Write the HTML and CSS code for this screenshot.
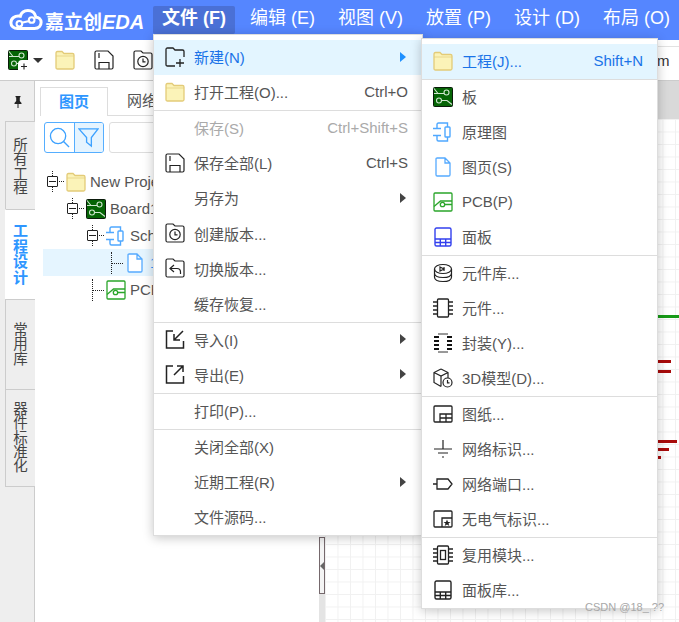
FILE: index.html
```html
<!DOCTYPE html>
<html lang="zh">
<head>
<meta charset="utf-8">
<title>嘉立创EDA</title>
<link rel="stylesheet" href="styles.css">
</head>
<body>
<svg class="defs" width="0" height="0">
  <symbol id="folder" viewBox="0 0 20 20"><path d="M1 3.2Q1 1.500 2.500 1.500H7L9 3.500H17.500Q19 3.500 19 5V17.500Q19 19 17.500 19H2.500Q1 19 1 17.500Z" fill="#fbf3b8" stroke="#e3cb78" stroke-width="1.300"/><path d="M1 6H19" stroke="#e3cb78" stroke-width=".7" fill="none"/></symbol>
  <symbol id="board" viewBox="0 0 20 20"><rect x=".5" y=".5" width="19" height="19" rx="1" fill="#056405" stroke="#0b1a0b"/><g fill="none" stroke="#cfe6cf" stroke-width="1.100"><circle cx="13.500" cy="5.500" r="2.500"/><circle cx="6" cy="13.500" r="2.500"/><path d="M1 6.500H11M8.500 13.500H14L19 17.500M1 1.500L5 6.500"/></g></symbol>
  <symbol id="sch" viewBox="0 0 20 20"><g fill="none" stroke="#4fa8ff" stroke-width="1.400"><path d="M4 6V2.500Q4 1 5.500 1H14.500V5M14.500 15V19H5.500Q4 19 4 17.500V14"/><rect x="12" y="5" width="5" height="10" rx=".8"/><path d="M0 6.500H8M0 13.500H8"/></g></symbol>
  <symbol id="page" viewBox="0 0 20 20"><path d="M3 2.200Q3 1 4.200 1H12L17 6V17.800Q17 19 15.800 19H4.200Q3 19 3 17.800ZM12 1V6H17" fill="#fff" stroke="#55aaff" stroke-width="1.300"/></symbol>
  <symbol id="pcb" viewBox="0 0 20 20"><g fill="none" stroke="#2aa52a" stroke-width="1.300"><path d="M2 1H18Q19 1 19 2V18Q19 19 18 19H2Q1 19 1 18V2Q1 1 2 1Z"/><circle cx="9.500" cy="12.500" r="2.200"/><path d="M1 14.500L7.500 9H19M11.500 12.500H19"/></g></symbol>
  <symbol id="panel" viewBox="0 0 20 20"><g fill="none" stroke="#3340ee" stroke-width="1.400"><rect x="2" y="1" width="16" height="18" rx="1.500"/><path d="M2 12H18M2 15.500H18M7.300 12V19M12.700 12V19"/></g></symbol>
  <symbol id="saveic" viewBox="0 0 20 20"><g fill="none" stroke="#222" stroke-width="1.200"><path d="M1 2.500Q1 1 2.500 1H14L19 6V17.500Q19 19 17.500 19H2.500Q1 19 1 17.500Z"/><path d="M5 19V12.500H15V19M5 3V8"/></g></symbol>
  <symbol id="verc" viewBox="0 0 20 20"><g fill="none" stroke="#222" stroke-width="1.200"><path d="M1 2.500Q1 1 2.500 1H8L10 3H17.500Q19 3 19 4.500V17.500Q19 19 17.500 19H2.500Q1 19 1 17.500Z"/><circle cx="10" cy="11.500" r="5.200"/><path d="M10 8.500V11.800H12.500"/></g></symbol>
  <symbol id="comp" viewBox="0 0 20 20"><g fill="none" stroke="#222" stroke-width="1.300"><rect x="4.500" y="1" width="11" height="18" rx="1"/><path d="M0 4H4.500M0 8H4.500M0 12H4.500M0 16H4.500M15.500 4H20M15.500 8H20M15.500 12H20M15.500 16H20"/></g></symbol>
</svg>

<header class="topbar">
  <div class="logo">
    <svg class="logo-cloud" viewBox="0 0 36 24"><path d="M9 21H27C32 21 34 17.500 34 14.500C34 11 31.500 9 28.500 9C27.500 4.500 24 2 20 2C16 2 13 4.500 12 8C6 7 2 10.500 2 15C2 18.500 5 21 9 21Z" fill="none" stroke="#fff" stroke-width="3.200"/><circle cx="11" cy="16" r="3" fill="none" stroke="#fff" stroke-width="2.200"/><circle cx="24" cy="12" r="3" fill="none" stroke="#fff" stroke-width="2.200"/><path d="M13.500 15L21.500 13" stroke="#fff" stroke-width="2.200"/></svg>
    <span class="logo-text">嘉立创<b class="logo-eda">EDA</b></span>
  </div>
  <nav class="nav">
    <span class="nav-item nav-active">文件 (F)</span>
    <span class="nav-item">编辑 (E)</span>
    <span class="nav-item">视图 (V)</span>
    <span class="nav-item">放置 (P)</span>
    <span class="nav-item">设计 (D)</span>
    <span class="nav-item">布局 (O)</span>
  </nav>
</header>

<div class="toolbar">
  <span class="tool tool-board">
    <svg class="ic"><use href="#board"/></svg>
    <svg class="plus-badge" viewBox="0 0 11 11"><path d="M0 11V4Q0 0 4 0H11V11Z" fill="#fff"/><path d="M6 3.500V9.500M3 6.500H9" stroke="#222" stroke-width="1.100"/></svg>
  </span>
  <span class="caret"></span>
  <svg class="ic tool"><use href="#folder"/></svg>
  <svg class="ic tool"><use href="#saveic"/></svg>
  <svg class="ic tool"><use href="#verc"/></svg>
  <span class="tool-right">m</span>
</div>

<main class="main">
  <aside class="side">
    <div class="pin"><svg class="pin-ic" viewBox="0 0 10 12"><path d="M2.500 0H7.500V1L6.800 1.500V5L8.500 7V8H5.500V12H4.500V8H1.500V7L3.200 5V1.500L2.500 1Z" fill="#222"/></svg></div>
    <div class="vtab vtab-1">所有工程</div>
    <div class="vtab vtab-2 vtab-active">工程设计</div>
    <div class="vtab vtab-3">常用库</div>
    <div class="vtab vtab-4">器件标准化</div>
  </aside>

  <section class="panel">
    <div class="tabs">
      <span class="tab tab-active">图页</span>
      <span class="tab">网络</span>
    </div>
    <div class="search">
      <div class="search-btns">
        <span class="sbtn"><svg class="sic" viewBox="0 0 22 22"><circle cx="9.500" cy="9.500" r="8" fill="none" stroke="#3ea2ff" stroke-width="1.400"/><path d="M15 15L21 21" stroke="#3ea2ff" stroke-width="1.400"/></svg></span>
        <span class="sbtn sbtn-on"><svg class="sic" viewBox="0 0 22 22"><path d="M1 2H21L14 11V20L9 16V11Z" fill="none" stroke="#3ea2ff" stroke-width="1.400"/></svg></span>
      </div>
      <span class="sinput"></span>
    </div>
    <ul class="tree">
      <li class="node lv0"><span class="tog"></span><svg class="ic"><use href="#folder"/></svg><span class="nlabel">New Project</span></li>
      <li class="node lv1"><span class="tog"></span><svg class="ic"><use href="#board"/></svg><span class="nlabel">Board1</span></li>
      <li class="node lv2"><span class="tog"></span><svg class="ic"><use href="#sch"/></svg><span class="nlabel">Sch1</span></li>
      <li class="node lv3 node-on"><span class="leaf"></span><svg class="ic"><use href="#page"/></svg><span class="nlabel nlabel-on">1.P1</span></li>
      <li class="node lv2b"><span class="leaf"></span><svg class="ic"><use href="#pcb"/></svg><span class="nlabel">PCB1</span></li>
    </ul>
  </section>

  <div class="split">
    <div class="split-handle"><span class="split-arrow"></span></div>
    <div class="split-dots"></div>
  </div>

  <section class="canvas">
    <div class="doc-tabs"></div>
    <div class="grid">
      <i class="wire wire-g"></i>
      <i class="wire wire-r1"></i>
      <i class="wire wire-r2"></i>
      <i class="wire wire-r3"></i>
      <i class="wire wire-r4"></i>
      <i class="wire wire-r5"></i>
    </div>
  </section>
</main>

<div class="menu menu-file">
  <div class="mi mi-hover"><svg class="ic mic" viewBox="0 0 20 20"><path d="M10 19H2.500Q1 19 1 17.500V2.500Q1 1 2.500 1H8L10 3H17.500Q19 3 19 4.500V10" fill="none" stroke="#222" stroke-width="1.300"/><path d="M15 12V20M11 16H19" stroke="#222" stroke-width="1.300"/></svg><span class="ml">新建(N)</span><span class="arr arr-blue"></span></div>
  <div class="mi"><svg class="ic mic"><use href="#folder"/></svg><span class="ml">打开工程(O)...</span><span class="sc">Ctrl+O</span></div>
  <div class="sep"></div>
  <div class="mi mi-off"><span class="mic"></span><span class="ml">保存(S)</span><span class="sc">Ctrl+Shift+S</span></div>
  <div class="mi"><svg class="ic mic"><use href="#saveic"/></svg><span class="ml">保存全部(L)</span><span class="sc">Ctrl+S</span></div>
  <div class="mi"><span class="mic"></span><span class="ml">另存为</span><span class="arr"></span></div>
  <div class="mi"><svg class="ic mic"><use href="#verc"/></svg><span class="ml">创建版本...</span></div>
  <div class="mi"><svg class="ic mic" viewBox="0 0 20 20"><g fill="none" stroke="#222" stroke-width="1.200"><path d="M1 2.500Q1 1 2.500 1H8L10 3H17.500Q19 3 19 4.500V17.500Q19 19 17.500 19H2.500Q1 19 1 17.500Z"/><path d="M9 7L5 10.500L9 14M5 10.500H12Q15.500 10.500 15.500 14V16"/></g></svg><span class="ml">切换版本...</span></div>
  <div class="mi"><span class="mic"></span><span class="ml">缓存恢复...</span></div>
  <div class="sep"></div>
  <div class="mi"><svg class="ic mic" viewBox="0 0 20 20"><g fill="none" stroke="#222" stroke-width="1.500"><path d="M8 2H1.500V19H18.500V12"/><path d="M18 2L9 11M9 5V11H15"/></g></svg><span class="ml">导入(I)</span><span class="arr"></span></div>
  <div class="mi"><svg class="ic mic" viewBox="0 0 20 20"><g fill="none" stroke="#222" stroke-width="1.500"><path d="M8 2H1.500V19H18.500V12"/><path d="M9 11L18 2M12 2H18V8"/></g></svg><span class="ml">导出(E)</span><span class="arr"></span></div>
  <div class="sep"></div>
  <div class="mi"><span class="mic"></span><span class="ml">打印(P)...</span></div>
  <div class="sep"></div>
  <div class="mi"><span class="mic"></span><span class="ml">关闭全部(X)</span></div>
  <div class="mi"><span class="mic"></span><span class="ml">近期工程(R)</span><span class="arr"></span></div>
  <div class="mi"><span class="mic"></span><span class="ml">文件源码...</span></div>
</div>

<div class="menu menu-new">
  <div class="mi mi-hover"><svg class="ic mic"><use href="#folder"/></svg><span class="ml">工程(J)...</span><span class="sc">Shift+N</span></div>
  <div class="sep"></div>
  <div class="mi"><svg class="ic mic"><use href="#board"/></svg><span class="ml">板</span></div>
  <div class="mi"><svg class="ic mic"><use href="#sch"/></svg><span class="ml">原理图</span></div>
  <div class="mi"><svg class="ic mic"><use href="#page"/></svg><span class="ml">图页(S)</span></div>
  <div class="mi"><svg class="ic mic"><use href="#pcb"/></svg><span class="ml">PCB(P)</span></div>
  <div class="mi"><svg class="ic mic"><use href="#panel"/></svg><span class="ml">面板</span></div>
  <div class="sep"></div>
  <div class="mi"><svg class="ic mic" viewBox="0 0 20 20"><g fill="none" stroke="#222" stroke-width="1.200"><ellipse cx="10" cy="6" rx="8.500" ry="4.500"/><path d="M1.500 6V14Q1.500 18.500 10 18.500Q18.500 18.500 18.500 14V6M1.500 10Q1.500 14.500 10 14.500Q18.500 14.500 18.500 10"/><path d="M7 4L11 6L7 8ZM11 4V8"/></g></svg><span class="ml">元件库...</span></div>
  <div class="mi"><svg class="ic mic"><use href="#comp"/></svg><span class="ml">元件...</span></div>
  <div class="mi"><svg class="ic mic" viewBox="0 0 20 20"><path d="M1 4H6M1 8H6M1 12H6M1 16H6M14 4H19M14 8H19M14 12H19M14 16H19" stroke="#111" stroke-width="2" fill="none"/><path d="M5 1H15M5 19H15" stroke="#333" stroke-width="1" fill="none"/></svg><span class="ml">封装(Y)...</span></div>
  <div class="mi"><svg class="ic mic" viewBox="0 0 20 20"><g fill="none" stroke="#222" stroke-width="1.200"><path d="M8 1L15 4.500V10M8 1L1 4.500V14.500L8 18.500M1 4.500L8 8L15 4.500M8 8V18.500"/><circle cx="14.500" cy="14.500" r="4.500"/><path d="M14.500 12V14.800H16.500"/></g></svg><span class="ml">3D模型(D)...</span></div>
  <div class="sep"></div>
  <div class="mi"><svg class="ic mic" viewBox="0 0 20 20"><g fill="none" stroke="#222" stroke-width="1.300"><rect x="1" y="2" width="18" height="16" rx="1"/><path d="M7 18V10H19M7 14H19M13 10V18"/></g></svg><span class="ml">图纸...</span></div>
  <div class="mi"><svg class="ic mic" viewBox="0 0 20 20"><path d="M10 1V10M1 10H19M5 14H15M9 18H11" stroke="#222" stroke-width="1.200" fill="none"/></svg><span class="ml">网络标识...</span></div>
  <div class="mi"><svg class="ic mic" viewBox="0 0 20 20"><path d="M0 10H4M4 5H15L19 10L15 15H4Z" stroke="#222" stroke-width="1.300" fill="none"/></svg><span class="ml">网络端口...</span></div>
  <div class="mi"><svg class="ic mic" viewBox="0 0 20 20"><rect x="1" y="2" width="18" height="16" rx="1" fill="none" stroke="#222" stroke-width="1.300"/><path d="M9 18V9H19" fill="none" stroke="#222" stroke-width="1.300"/><path d="M14 10.500L15 13H17.500L15.500 14.500L16.300 17L14 15.500L11.700 17L12.500 14.500L10.500 13H13Z" fill="#222"/></svg><span class="ml">无电气标识...</span></div>
  <div class="sep"></div>
  <div class="mi"><svg class="ic mic" viewBox="0 0 20 20"><use href="#comp"/><rect x="7.500" y="5.500" width="5" height="9" fill="none" stroke="#222" stroke-width="1.300"/></svg><span class="ml">复用模块...</span></div>
  <div class="mi"><svg class="ic mic" viewBox="0 0 20 20"><g fill="none" stroke="#222" stroke-width="1.400"><rect x="2" y="1" width="16" height="18" rx="1.500"/><path d="M2 12H18M2 15.500H18M7.300 12V19M12.700 12V19"/></g></svg><span class="ml">面板库...</span></div>
</div>

<div class="watermark">CSDN @18_ ??</div>
</body>
</html>
```
FILE: styles.css
```css
* { box-sizing: border-box; }
html, body { margin: 0; padding: 0; }
body {
  position: relative;
  width: 679px;
  height: 622px;
  overflow: hidden;
  display: flex;
  flex-direction: column;
  background: #fff;
  font-family: "Liberation Sans", "Noto Sans CJK SC", sans-serif;
  font-size: 15px;
  color: #555;
}
.defs { position: absolute; }
.ic { width: 20px; height: 20px; display: block; flex: none; }

/* top bar */
.topbar {
  height: 40px;
  flex: none;
  display: flex;
  background: #5586ff;
  color: #fff;
}
.logo {
  width: 153px;
  flex: none;
  display: flex;
  align-items: center;
  padding: 0 0 0 9px;
  gap: 2px;
}
.logo-cloud { width: 34px; height: 24px; flex: none; }
.logo-text {
  font-size: 19px;
  font-weight: 700;
  white-space: nowrap;
}
.logo-eda { font-size: 20px; font-style: italic; font-weight: 700; }
.nav { display: flex; height: 28px; margin-top: 6px; gap: 23px; }
.nav-item {
  font-size: 18px;
  line-height: 25px;
  white-space: nowrap;
}
.nav-active {
  background: #4a70d6;
  border-radius: 2px;
  font-weight: 700;
  padding: 0 9px;
  margin-right: -8px;
}

/* toolbar */
.toolbar {
  height: 41px;
  flex: none;
  display: flex;
  align-items: center;
  padding-left: 8px;
  border-bottom: 1px solid #ccc;
  gap: 19px;
}
.tool { flex: none; }
.tool-board { position: relative; width: 20px; height: 20px; }
.plus-badge { position: absolute; right: -1px; bottom: -1px; width: 11px; height: 11px; }
.caret {
  width: 0;
  height: 0;
  margin: 0 -7px 0 -14px;
  border: 5px solid transparent;
  border-top: 5px solid #333;
  border-bottom: 0;
}
.tool-right {
  margin-left: auto;
  align-self: stretch;
  margin-top: 6px;
  width: 22px;
  border-top: 1px solid #e2e2e2;
  line-height: 28px;
  color: #333;
  font-size: 15px;
}

/* main */
.main { flex: 1; display: flex; min-height: 0; }
.side {
  width: 35px;
  flex: none;
  background: #eee;
  border-right: 1px solid #ccc;
  padding-left: 5px;
}
.pin { height: 41px; display: flex; align-items: center; justify-content: center; padding-right: 4px; }
.pin-ic { width: 10px; height: 12px; }
.vtab {
  width: 30px;
  border: 1px solid #ccc;
  border-right: 0;
  margin-top: -1px;
  writing-mode: vertical-rl;
  text-orientation: upright;
  font-size: 14.500px;
  line-height: 30px;
  letter-spacing: -.1px;
  color: #444;
  padding-top: 15px;
  padding-right: 1px;
  background: #eee;
}
.vtab-1 { height: 89px; }
.vtab-2 { height: 91px; padding-top: 13px; }
.vtab-3 { height: 91px; padding-top: 22px; }
.vtab-4 { height: 98px; padding-top: 11px; }
.vtab-active { background: #fff; color: #2e96ff; font-size: 15px; font-weight: 700; letter-spacing: .5px; border-color: #fff; border-top-color: #ccc; border-bottom-color: #ccc; }

.panel { position: relative; z-index: 0; width: 284px; flex: none; padding: 6px 0 0 5px; background: #fff; }
.tabs { display: flex; height: 29px; border-bottom: 1px solid #ddd; }
.tab { width: 68px; height: 29px; line-height: 28px; text-align: center; color: #555; font-size: 15px; }
.tab-active { color: #2e96ff; font-weight: 700; border: 1px solid #ddd; border-bottom: 0; background: #fff; }
.search { display: flex; gap: 5px; margin: 6px 0 0 4px; height: 31px; }
.search-btns { display: flex; width: 60px; border: 1px solid #55aeff; border-radius: 3px; overflow: hidden; }
.sbtn { flex: 1; display: flex; align-items: center; justify-content: center; }
.sbtn-on { background: #e5f4ff; border-left: 1px solid #55aeff; }
.sic { width: 21px; height: 21px; }
.sinput { flex: 1; border: 1px solid #ddd; border-radius: 3px; }
.tree { list-style: none; margin: 15px 0 0; padding: 0; }
.node { display: flex; align-items: center; height: 27px; position: relative; }
.nlabel { margin-left: 4px; white-space: nowrap; color: #555; font-size: 15px; }
.nlabel-on { color: #2e96ff; margin-left: 5px; }
.node-on { background: #e5f5ff; margin-left: 3px; padding-left: 82px; }
.lv0 { padding-left: 26px; }
.lv1 { padding-left: 46px; }
.lv2 { padding-left: 66px; }
.lv2b { padding-left: 66px; }
.tog {
  position: absolute;
  width: 11px;
  height: 11px;
  margin-left: -19px;
  border: 1px solid #222;
  background: linear-gradient(#222, #222) center / 7px 1px no-repeat #fff;
  border-radius: 1px;
}
.tog::before { content: ""; position: absolute; left: 4px; top: -6px; height: 21px; border-left: 1px dotted #222; z-index: -1; }
.tog::after { content: ""; position: absolute; left: 11px; top: 4px; width: 5px; border-top: 1px dotted #222; }
.leaf { position: absolute; width: 12px; height: 22px; margin-left: -14px; border-left: 1px dotted #222; }
.leaf::after { content: ""; position: absolute; left: 0; top: 11px; width: 11px; border-top: 1px dotted #222; }

.split { width: 6px; flex: none; display: flex; flex-direction: column; position: relative; }
.split-handle { margin-top: 456px; height: 57px; border: 1px solid #75686c; background: #f4f4f4; display: flex; align-items: center; }
.split-arrow { width: 0; height: 0; border: 4px solid transparent; border-right: 4px solid #666; border-left: 0; }
.split-dots { flex: 1; background: #e4e4e4; }

.canvas { flex: 1; display: flex; flex-direction: column; min-width: 0; }
.doc-tabs { height: 38px; flex: none; background: #d9d9d9; }
.grid {
  flex: 1;
  position: relative;
  background-color: #fff;
  background-image:
    linear-gradient(#f1f1f1 1px, transparent 1px),
    linear-gradient(90deg, #f1f1f1 1px, transparent 1px);
  background-size: 12.5px 12.5px;
}
.wire { position: absolute; height: 3px; background: #a80b0b; }
.wire-g { left: 333px; right: 0; top: 196px; background: #189a18; }
.wire-r1 { left: 333px; top: 241px; width: 13px; }
.wire-r2 { left: 333px; top: 251px; width: 13px; }
.wire-r3 { left: 333px; top: 321px; width: 19px; }
.wire-r4 { left: 333px; top: 329px; width: 11px; }
.wire-r5 { left: 333px; top: 337px; width: 3px; }

/* menus */
.menu {
  position: absolute;
  background: #fff;
  border: 1px solid #ddd;
  padding: 5px 0 0;
  box-shadow: 0 2px 10px rgba(0, 0, 0, .22);
}
.menu-file { left: 153px; top: 34px; width: 270px; height: 502px; }
.menu-new { left: 421px; top: 38px; width: 237px; height: 571px; }
.mi { height: 35px; display: flex; align-items: center; padding: 0 14px 2px 11px; white-space: nowrap; color: #555; }
.menu-file .mi { height: 35.100px; }
.mic { width: 20px; height: 20px; flex: none; display: block; }
.ml { margin-left: 9px; flex: 1; }
.sc { color: #555; }
.arr { width: 0; height: 0; border: 5px solid transparent; border-left: 6px solid #444; border-right: 0; margin-right: 2px; }
.arr-blue { border-left-color: #1e90ff; }
.mi-hover { background: #e3f5ff; color: #1a73e8; }
.mi-hover .sc { color: #1a73e8; }
.mi-off, .mi-off .sc { color: #aaa; }
.sep { height: 1px; background: #ddd; }
.watermark { position: absolute; left: 585px; top: 601px; font-size: 11px; color: #a8a8a8; white-space: nowrap; }
```
